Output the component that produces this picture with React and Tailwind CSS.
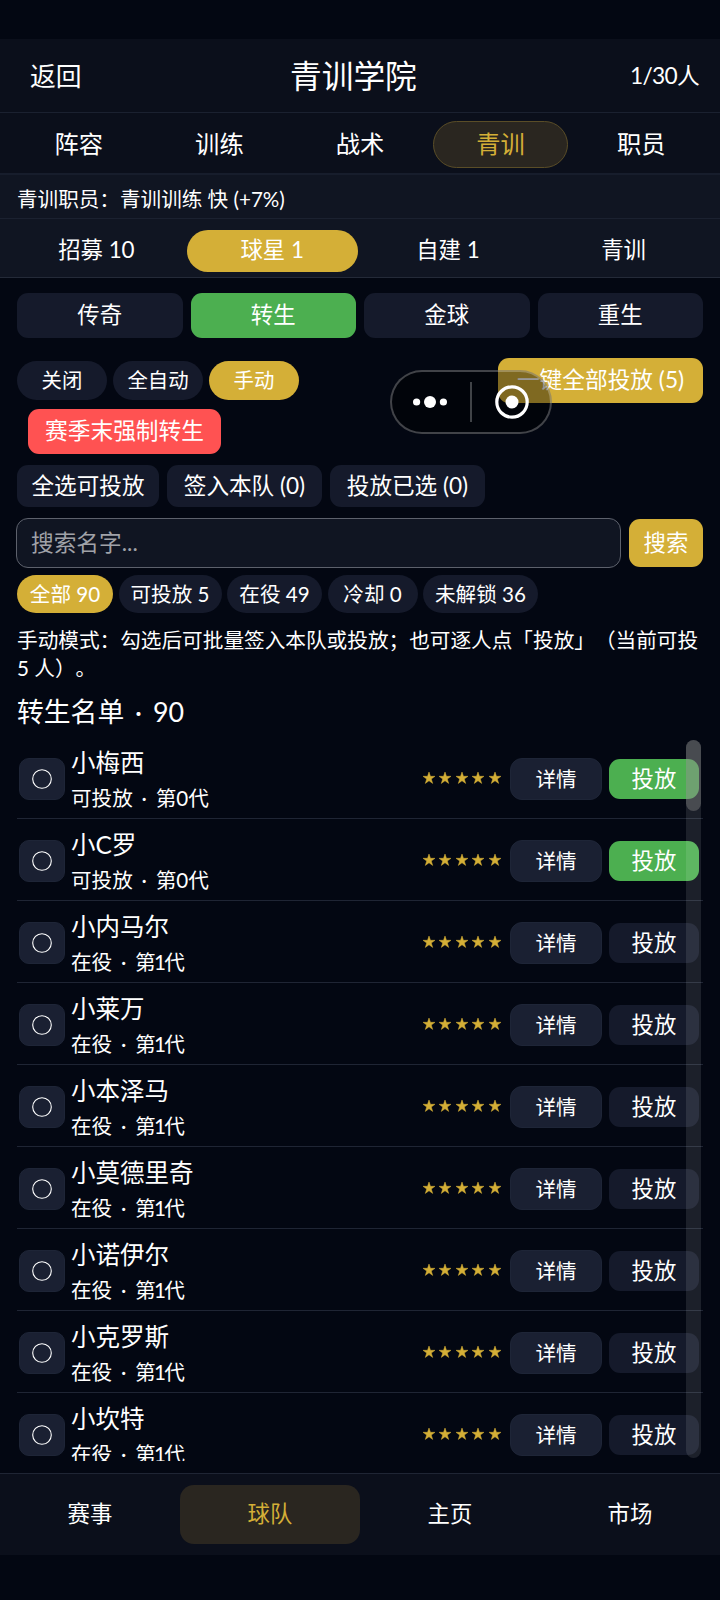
import React, { useState } from "react";
import clsx from "clsx";

const MAIN_TABS = ["阵容", "训练", "战术", "青训", "职员"];
const SUB_TABS = ["招募 10", "球星 1", "自建 1", "青训"];
const POOLS = ["传奇", "转生", "金球", "重生"];
const NAV = ["赛事", "球队", "主页", "市场"];

const MODES = [
  { label: "关闭", width: "w-[90px]" },
  { label: "全自动", width: "w-[90px]" },
  { label: "手动", width: "w-[90px]" },
];

const BATCH_ACTIONS = [
  { label: "全选可投放", width: "w-[142px]" },
  { label: "签入本队 (0)", width: "w-[155px]" },
  { label: "投放已选 (0)", width: "w-[155px]" },
];

const FILTERS = [
  { label: "全部 90", width: "w-[96px]" },
  { label: "可投放 5", width: "w-[103px]" },
  { label: "在役 49", width: "w-[95px]" },
  { label: "冷却 0", width: "w-[90px]" },
  { label: "未解锁 36", width: "w-[115px]" },
];

const PLAYERS = [
  { name: "小梅西", status: "可投放", gen: 0 },
  { name: "小C罗", status: "可投放", gen: 0 },
  { name: "小内马尔", status: "在役", gen: 1 },
  { name: "小莱万", status: "在役", gen: 1 },
  { name: "小本泽马", status: "在役", gen: 1 },
  { name: "小莫德里奇", status: "在役", gen: 1 },
  { name: "小诺伊尔", status: "在役", gen: 1 },
  { name: "小克罗斯", status: "在役", gen: 1 },
  { name: "小坎特", status: "在役", gen: 1 },
];

function Stars() {
  return (
    <div className="flex gap-[4.6px] shrink-0">
      {[0, 1, 2, 3, 4].map((i) => (
        <svg key={i} viewBox="0 0 24 24" className="w-3 h-3" fill="#d4af37" stroke="#d4af37" strokeWidth="1">
          <path d="M12 0l2.9 8.6H24l-7.4 5.4 2.8 8.9L12 17.5l-7.4 5.4L7.4 14 0 8.6h9.1z" />
        </svg>
      ))}
    </div>
  );
}

function PlayerRow({ player, checked, onToggle }) {
  const canDeploy = player.status === "可投放";
  return (
    <div className="flex items-center h-[82px] shrink-0 border-b border-[#1f2534] pl-0.5 pr-1">
      <button
        onClick={onToggle}
        className="w-[46px] h-[42px] mt-[3px] rounded-[10px] bg-[#1a2032] border border-[#1e2537] flex items-center justify-center shrink-0"
      >
        <svg viewBox="0 0 20 20" className="w-5 h-5" fill={checked ? "#fff" : "none"} stroke="#fff" strokeWidth="1.1">
          <circle cx="10" cy="10" r="9.3" />
        </svg>
      </button>

      <div className="flex-1 ml-[6px] pt-[5px]">
        <div className="text-[24.5px] leading-[36px]">{player.name}</div>
        <div className="text-[20.6px] leading-[34px]">
          {player.status} <span className="mx-[3.5px]">·</span> 第
          <span className={clsx(player.gen === 1 && "-mx-[1.7px]")}>{player.gen}</span>代
        </div>
      </div>

      <Stars />

      <button className="w-[92px] h-[42px] mt-[3px] ml-[9px] rounded-[12px] bg-[#1a2032] border border-[#1e2537] text-[20.6px] shrink-0">
        详情
      </button>
      <button
        className={clsx(
          "w-[90px] h-10 mt-[3px] ml-[7px] rounded-[11px] text-[22.4px] leading-none shrink-0",
          canDeploy ? "bg-[#4caf50]" : "bg-[#151a2b]"
        )}
      >
        投放
      </button>
    </div>
  );
}

export default function App() {
  const [tab, setTab] = useState("青训");
  const [subTab, setSubTab] = useState("球星 1");
  const [pool, setPool] = useState("转生");
  const [mode, setMode] = useState("手动");
  const [filter, setFilter] = useState("全部 90");
  const [nav, setNav] = useState("球队");
  const [selected, setSelected] = useState([]);

  const toggle = (name) => {
    setSelected((prev) => (prev.includes(name) ? prev.filter((n) => n !== name) : [...prev, name]));
  };

  return (
    <div className="relative w-[720px] h-[1600px] overflow-hidden flex flex-col pt-[39px] bg-[#030712] text-white font-['Lato','Noto_Sans_CJK_SC',sans-serif] [text-spacing-trim:space-all]">

      {/* Header */}
      <header className="h-[74px] shrink-0 bg-[#0b0f1b] border-b border-[#1b2130] grid grid-cols-[260px_auto_1fr] items-center pl-[30px] pr-[21px] pt-0.5">
        <button className="text-[25.8px] text-left">返回</button>
        <h1 className="text-[31.7px] leading-none">青训学院</h1>
        <span className="text-[22.7px] text-right tracking-[-0.7px]">1/30人</span>
      </header>

      {/* Main tabs */}
      <nav className="h-[62px] shrink-0 bg-[#0b0f1b] border-b-2 border-[#171d2c] flex items-center gap-[5px] px-[11px] pt-0.5">
        {MAIN_TABS.map((item) => (
          <button
            key={item}
            onClick={() => setTab(item)}
            className={clsx(
              "flex-1 h-[47px] rounded-full text-[24.3px] leading-none border",
              tab === item ? "bg-[#2a2620] border-[#5a4d27] text-[#d4af37]" : "border-transparent"
            )}
          >
            {item}
          </button>
        ))}
      </nav>

      <div className="h-11 shrink-0 bg-[#101522] border-b border-[#1b2130] px-[17px] pt-[5px] flex items-center text-[20.6px]">
        青训职员：青训训练 快 (+7%)
      </div>

      <nav className="h-[59px] shrink-0 bg-[#101522] border-b border-[#242a38] flex items-center gap-[5px] px-[11px] pt-[5px]">
        {SUB_TABS.map((item) => (
          <button
            key={item}
            onClick={() => setSubTab(item)}
            className={clsx("flex-1 h-[42px] rounded-full text-[22.4px] leading-none", subTab === item && "bg-[#d4af37]")}
          >
            {item}
          </button>
        ))}
      </nav>

      {/* Content */}
      <main className="h-[1195px] shrink-0 flex flex-col px-[17px] pt-[15px]">
        <div className="flex gap-2">
          {POOLS.map((item) => (
            <button
              key={item}
              onClick={() => setPool(item)}
              className={clsx(
                "flex-1 h-[45px] rounded-[11px] text-[22.4px] leading-none",
                pool === item ? "bg-[#4caf50]" : "bg-[#151a2b]"
              )}
            >
              {item}
            </button>
          ))}
        </div>

        <div className="flex items-center justify-between mt-[19px] h-[46px]">
          <div className="flex gap-1.5">
            {MODES.map((item) => (
              <button
                key={item.label}
                onClick={() => setMode(item.label)}
                className={clsx(
                  "h-[39px] rounded-full text-[20.4px] leading-none",
                  item.width,
                  mode === item.label ? "bg-[#d4af37]" : "bg-[#151a2b]"
                )}
              >
                {item.label}
              </button>
            ))}
          </div>
          <button className="w-[205px] h-[45px] rounded-[11px] bg-[#d4af37] text-[22.7px] leading-none whitespace-nowrap">
            一键全部投放 (5)
          </button>
        </div>

        <button className="w-[193px] h-[45px] mt-[6px] ml-[11px] shrink-0 rounded-[11px] bg-[#ff5252] text-[22.7px] leading-none">
          赛季末强制转生
        </button>

        <div className="flex gap-2 mt-[11px]">
          {BATCH_ACTIONS.map((item) => (
            <button
              key={item.label}
              className={clsx("h-[42px] rounded-[11px] bg-[#151a2b] text-[22.6px] leading-none whitespace-nowrap", item.width)}
            >
              {item.label}
            </button>
          ))}
        </div>

        <div className="flex items-center gap-2 mt-[11px] -ml-px">
          <input
            placeholder="搜索名字..."
            className="flex-1 min-w-0 h-[50px] rounded-[12px] bg-[#101522] border border-[#5d616c] px-[14px] pb-0.5 text-[22.7px] placeholder:text-[#a0a2a8] outline-none"
          />
          <button className="w-[74px] h-12 rounded-[11px] bg-[#d4af37] text-[22.4px] leading-none">搜索</button>
        </div>

        <div className="flex gap-[5.5px] mt-[7px]">
          {FILTERS.map((item) => (
            <button
              key={item.label}
              onClick={() => setFilter(item.label)}
              className={clsx(
                "h-[38px] rounded-full text-[20.6px] leading-none whitespace-nowrap",
                item.width,
                filter === item.label ? "bg-[#d4af37]" : "bg-[#151a2b]"
              )}
            >
              {item.label}
            </button>
          ))}
        </div>

        <p className="mt-[13px] text-[20.65px] leading-[28px] whitespace-nowrap">
          手动模式：勾选后可批量签入本队或投放；也可逐人点「投放」（当前可投
          <br />5 人）。
        </p>

        <h2 className="mt-[11px] text-[26.8px] leading-[38px]">
          转生名单 <span className="mx-[4px]">·</span> 90
        </h2>

        {/* Player list */}
        <div className="relative h-[724px] shrink-0 mt-[6px] overflow-hidden flex flex-col">
          {PLAYERS.map((player) => (
            <PlayerRow
              key={player.name}
              player={player}
              checked={selected.includes(player.name)}
              onToggle={() => toggle(player.name)}
            />
          ))}
          <div className="absolute right-0.5 top-[3px] w-[15px] h-[718px] rounded-full bg-white/10">
            <div className="h-[71px] rounded-full bg-[#858585]/43" />
          </div>
        </div>
      </main>

      {/* Bottom nav */}
      <nav className="h-[82px] shrink-0 bg-[#0b0f1b] border-t border-[#1f2534] flex items-center pb-px">
        {NAV.map((item) => (
          <button
            key={item}
            onClick={() => setNav(item)}
            className={clsx("flex-1 h-[59px] rounded-[14px] text-[22.4px] leading-none", nav === item && "bg-[#2a2620] text-[#d4af37]")}
          >
            {item}
          </button>
        ))}
      </nav>

      {/* Floating mini-program capsule */}
      <div className="absolute left-[390px] top-[370px] w-[162px] h-16 rounded-full bg-black/40 border-2 border-white/25 flex items-center">
        <svg viewBox="0 0 34 12" className="w-[34px] h-3 ml-[21px]" fill="#fff">
          <circle cx="3.6" cy="6" r="3.6" />
          <circle cx="17" cy="6" r="6" />
          <circle cx="30.4" cy="6" r="3.6" />
        </svg>
        <div className="w-[1.5px] h-10 ml-[23px] bg-white/25" />
        <svg viewBox="0 0 34 34" className="w-[34px] h-[34px] ml-[23px]" fill="none">
          <circle cx="17" cy="17" r="15.2" stroke="#fff" strokeWidth="3.2" />
          <circle cx="17" cy="17" r="6.5" fill="#fff" />
        </svg>
      </div>

    </div>
  );
}
